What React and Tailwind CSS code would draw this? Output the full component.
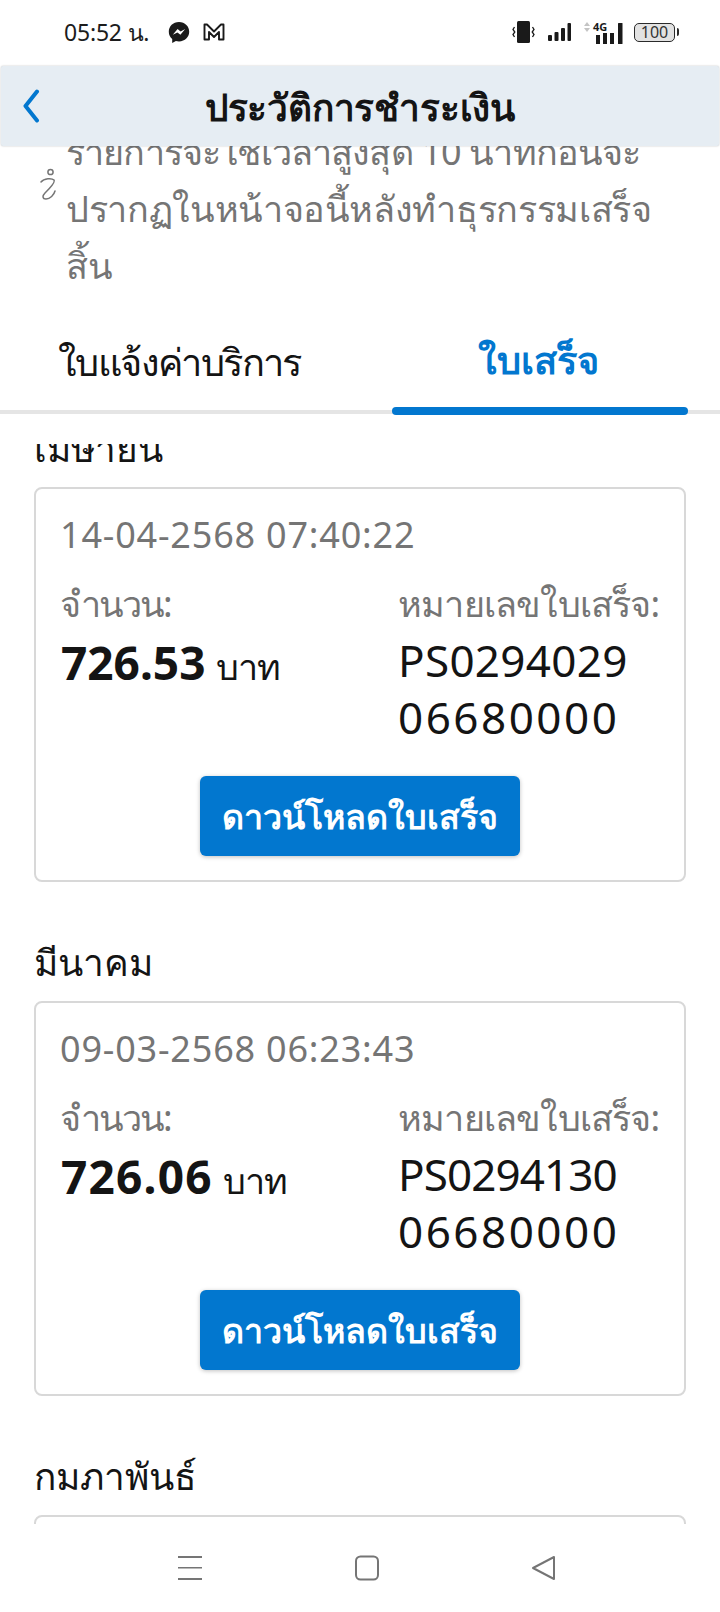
import React from 'react';

const receipts = [
  { month: 'เมษายน', date: '14-04-2568 07:40:22', amount: '726.53', amountCls: 'tracking-normal', no: 'PS0294029', noCls: 'tracking-[0.3px]' },
  { month: 'มีนาคม', date: '09-03-2568 06:23:43', amount: '726.06', amountCls: 'tracking-[1.2px]', no: 'PS0294130', noCls: 'tracking-[-0.9px]' },
];

const StatusBar = () => (
  <div className="flex h-[66px] shrink-0 items-center justify-between pb-[2px] pl-[64px] pr-[41px] text-[#1c1c1c]">
    <div className="flex items-center">
      <span className="text-[23px] leading-none tracking-[-0.2px]">05:52 น.</span>
      <svg className="ml-[19px]" width="22" height="23" viewBox="0 0 22 23">
        <path fill="#1a1a1a" d="M11 1C5 1 .8 5.3.8 10.800c0 3 1.200 5.500 3.400 7.200v4l3.700-2c1 .3 2 .4 3.100.4 6 0 10.200-4.300 10.200-9.600S17 1 11 1z" />
        <path fill="#fff" d="M4.800 13.800l4.800-5.800 3 2.400 4.600-2.400-4.800 5.800-3-2.400z" />
      </svg>
      <svg className="ml-[13px]" width="22" height="18" viewBox="0 0 22 18" fill="none" stroke="#1a1a1a" strokeWidth="1.900" strokeLinejoin="round">
        <path d="M1.500 16.500V1.500h2.500L11 8.500l7-7h2.500v15h-4.500V9l-5 5-5-5v7.500z" />
      </svg>
    </div>
    <div className="flex items-center">
      <svg width="23" height="22" viewBox="0 0 23 22" fill="#1a1a1a">
        <rect x="5" y="0" width="13" height="22" rx="1.500" />
        <path d="M2.500 6l-1.500 2.500 1.800 2.500L1 13.500 2.500 16M20.500 6l1.500 2.500-1.800 2.500 1.800 2.500-1.500 2.500" fill="none" stroke="#1a1a1a" strokeWidth="1.300" />
      </svg>
      <svg className="ml-[13px]" width="23" height="18" viewBox="0 0 23 18" fill="#1a1a1a">
        <rect x="0" y="12" width="4" height="6" rx="1" />
        <rect x="6.500" y="9" width="4" height="9" rx="1" />
        <rect x="13" y="5" width="4" height="13" rx="1" />
        <rect x="19.500" y="0" width="3.500" height="18" rx="1" />
      </svg>
      <div className="relative ml-[13px] h-[23px] w-[39px]">
        <svg className="absolute left-0 top-[1px]" width="6" height="10" viewBox="0 0 6 10" fill="#c4c4c4">
          <path d="M3 0l3 4H0zM3 10L0 6h6z" />
        </svg>
        <span className="absolute left-[9px] top-[0px] text-[11px] font-bold leading-[11px] text-[#1a1a1a]">4G</span>
        <svg className="absolute bottom-0 left-[12px]" width="27" height="21" viewBox="0 0 27 21" fill="#1a1a1a">
          <rect x="0" y="12" width="4" height="9" />
          <rect x="7" y="10" width="4" height="11" />
          <rect x="14" y="10" width="4" height="11" />
          <rect x="22" y="0" width="4.500" height="21" rx="0.500" />
        </svg>
      </div>
      <div className="ml-[11px] flex items-center">
        <div className="flex h-[19px] w-[41px] items-center justify-center rounded-[5px] border-[1.500px] border-[#2a2a2a] bg-[#e2e2e2] text-[16px] leading-none text-[#333]">100</div>
        <div className="ml-[2px] h-[8px] w-[2px] rounded-r-sm bg-[#2a2a2a]" />
      </div>
    </div>
  </div>
);

const Header = () => (
  <div className="relative z-10 mx-[1px] flex h-[80px] shrink-0 items-center justify-center rounded-[2px] bg-[#e6edf3] shadow-[0_0_2px_rgba(0,0,0,0.25)]">
    <svg className="absolute left-[19px] top-[23px]" width="24" height="34" viewBox="0 0 24 34" fill="none" stroke="#0277cf" strokeWidth="4" strokeLinecap="round" strokeLinejoin="round">
      <path d="M17 2.500L5.500 17 17 31.500" />
    </svg>
    <h1 className="text-[37px] font-bold leading-none tracking-[-0.2px] text-[#141414]">ประวัติการชำระเงิน</h1>
  </div>
);

const Notice = () => (
  <div className="relative h-[164px] shrink-0 overflow-hidden">
    <svg className="absolute left-[40px] top-[22px]" width="16" height="32" viewBox="0 0 16 32" fill="none" stroke="#757575" strokeWidth="1.500" strokeLinecap="round">
      <circle cx="10.500" cy="4" r="2.600" />
      <path d="M1 14C4 10 12 10 14 12c1.500 2-4 8-9 13-3 3-2.500 6 1 6 4 0 8-4 9-8" />
    </svg>
    <p className="ml-[66px] mt-[-23px] whitespace-nowrap text-[36px] leading-[57px] text-[#757575]">
      <span className="tracking-[-0.85px]">รายการจะใช้เวลาสูงสุด 10 นาทีก่อนจะ</span><br />
      <span className="tracking-[-0.35px]">ปรากฏในหน้าจอนี้หลังทำธุรกรรมเสร็จ</span><br />
      สิ้น
    </p>
  </div>
);

const Tabs = () => (
  <div className="relative h-[104px] shrink-0 border-b-[4px] border-[#e5e5e5]">
    <div className="flex h-full">
      <div className="w-[390px] pl-[58px] pt-[26px] text-[38px] leading-[50px] tracking-[-1.600px] text-[#141414]">ใบแจ้งค่าบริการ</div>
      <div className="w-[296px] pt-[24px] text-center text-[38px] font-bold leading-[50px] text-[#0277cf]">ใบเสร็จ</div>
    </div>
    <div className="absolute bottom-[-5px] left-[392px] h-[8px] w-[296px] rounded-[4px] bg-[#0277cf]" />
  </div>
);

const MonthTitle = ({ children }) => (
  <div className="h-[44px] overflow-hidden pl-[34px] text-[37px] leading-[60px] text-[#141414]">{children}</div>
);

const ReceiptCard = ({ r }) => (
  <div>
    <MonthTitle>{r.month}</MonthTitle>
    <div className="mx-[34px] mt-[25px] h-[395px] rounded-[8px] border-2 border-[#d8d8d8] bg-white pl-[24px] pr-[24px] pt-[18px]">
      <div className="text-[36px] leading-[56px] tracking-[0.8px] text-[#757575]">{r.date}</div>
      <div className="mt-[13px] flex">
        <div className="w-[338px]">
          <div className="text-[36px] leading-[56px] tracking-[-2px] text-[#757575]">จำนวน:</div>
          <div className="pl-[1px] leading-[60px] text-[#141414]">
            <span className={`text-[46px] font-bold ${r.amountCls}`}>{r.amount}</span>
            <span className="ml-[10px] text-[36px] tracking-[-1px]">บาท</span>
          </div>
        </div>
        <div className="whitespace-nowrap">
          <div className="text-[36px] leading-[56px] tracking-[-0.8px] text-[#757575]">หมายเลขใบเสร็จ:</div>
          <div className={`text-[44px] leading-[57px] text-[#141414] ${r.noCls}`}>{r.no}</div>
          <div className="text-[44px] leading-[57px] tracking-[2.500px] text-[#141414]">06680000</div>
        </div>
      </div>
      <div className="mt-[30px] flex justify-center">
        <button className="flex h-[80px] w-[320px] shrink-0 items-center justify-center rounded-[6px] bg-[#0277cf] text-[34px] font-bold text-white shadow-[0_1px_4px_rgba(0,0,0,0.25)]">ดาวน์โหลดใบเสร็จ</button>
      </div>
    </div>
  </div>
);

const NavBar = () => (
  <div className="flex h-[88px] shrink-0 items-start bg-white pt-[31px]">
    <svg className="ml-[177px]" width="26" height="26" viewBox="0 0 26 26" fill="#757575">
      <rect x="1" y="1" width="24" height="2" />
      <rect x="1" y="12" width="24" height="1.500" />
      <rect x="1" y="23" width="24" height="2" />
    </svg>
    <svg className="ml-[151px]" width="26" height="26" viewBox="0 0 26 26" fill="none" stroke="#757575" strokeWidth="2">
      <rect x="2" y="1.500" width="22" height="23" rx="4.500" />
    </svg>
    <svg className="ml-[151px]" width="26" height="26" viewBox="0 0 26 26" fill="none" stroke="#757575" strokeWidth="2" strokeLinejoin="round">
      <path d="M23 2v22L2 13z" />
    </svg>
  </div>
);

const App = () => {
  return (
    <div className="flex h-[1612px] w-[720px] flex-col overflow-hidden bg-white" style={{ fontFamily: '"Noto Sans", sans-serif' }}>
      <StatusBar />
      <Header />
      <Notice />
      <Tabs />
      <div className="mt-[30px] min-h-0 flex-1 overflow-hidden">
        <div className="mt-[-26px] space-y-[50px]">
          {receipts.map(r => <ReceiptCard key={r.date} r={r} />)}
          <div>
            <MonthTitle>กุมภาพันธ์</MonthTitle>
            <div className="mx-[34px] mt-[25px] h-[395px] rounded-[8px] border-2 border-[#d8d8d8] bg-white" />
          </div>
        </div>
      </div>
      <NavBar />
    </div>
  );
};

export default App;
